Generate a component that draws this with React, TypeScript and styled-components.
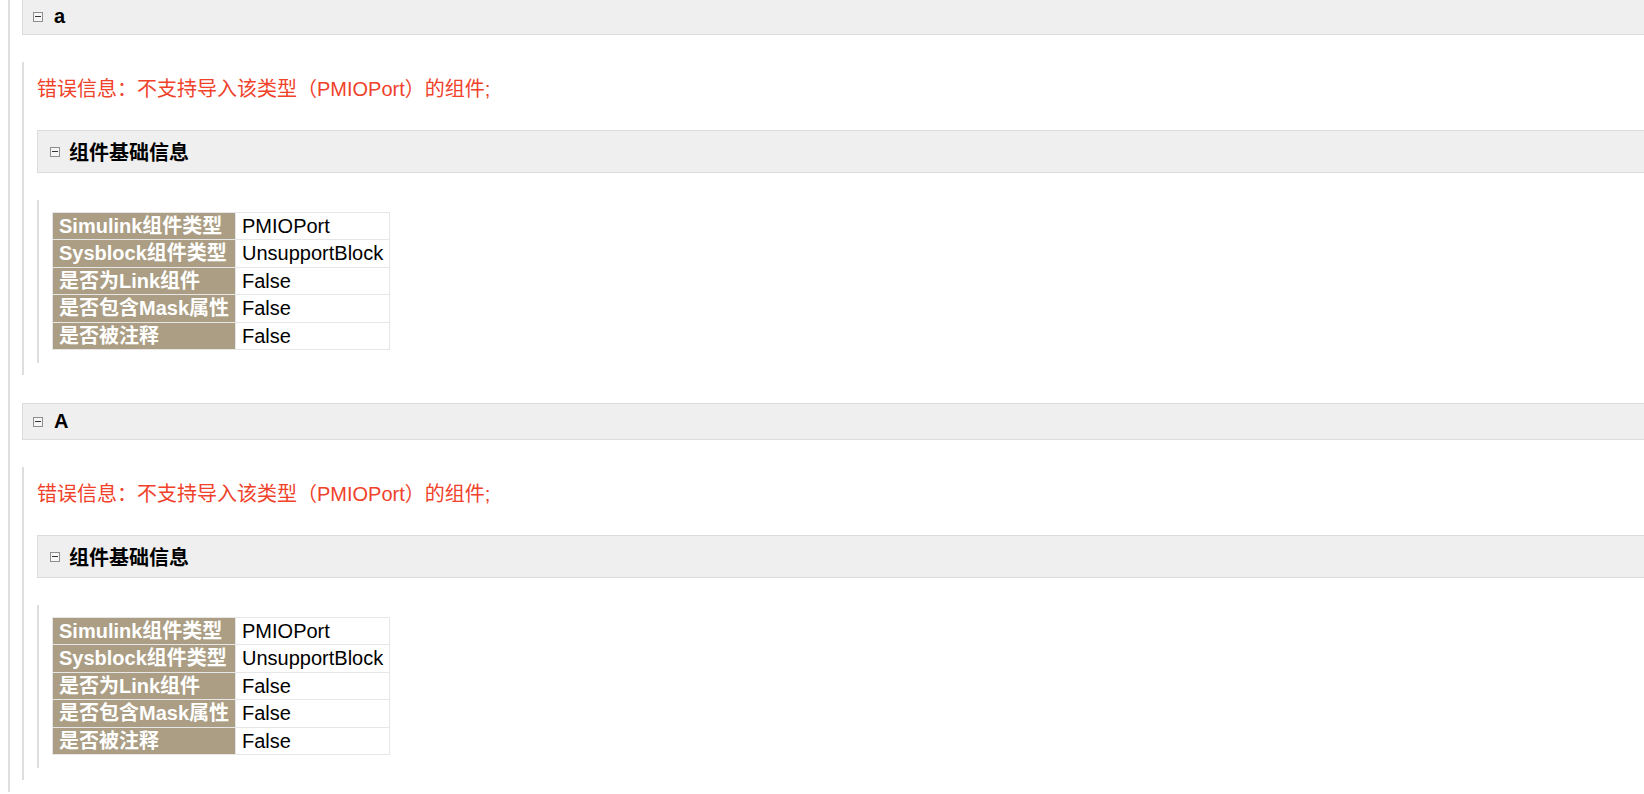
import styled, { createGlobalStyle } from 'styled-components';

const GlobalStyle = createGlobalStyle`
  html, body {
    margin: 0;
    padding: 0;
    background: #fff;
    overflow: hidden;
  }
  body {
    padding-left: 8px;
    font-family: "Liberation Sans", Arial, "Noto Sans CJK SC", sans-serif;
  }
`

interface InfoRow {
  label: string
  value: string
}

interface BlockData {
  name: string
  error: string
  rows: InfoRow[]
}

const blocks: BlockData[] = [
  {
    name: 'a',
    error: '错误信息：不支持导入该类型（PMIOPort）的组件;',
    rows: [
      { label: 'Simulink组件类型', value: 'PMIOPort' },
      { label: 'Sysblock组件类型', value: 'UnsupportBlock' },
      { label: '是否为Link组件', value: 'False' },
      { label: '是否包含Mask属性', value: 'False' },
      { label: '是否被注释', value: 'False' },
    ],
  },
  {
    name: 'A',
    error: '错误信息：不支持导入该类型（PMIOPort）的组件;',
    rows: [
      { label: 'Simulink组件类型', value: 'PMIOPort' },
      { label: 'Sysblock组件类型', value: 'UnsupportBlock' },
      { label: '是否为Link组件', value: 'False' },
      { label: '是否包含Mask属性', value: 'False' },
      { label: '是否被注释', value: 'False' },
    ],
  },
]

const Toggle = () => <ToggleBox><ToggleBar /></ToggleBox>

export default function App() {
  return (
    <>
      <GlobalStyle />
      <Page>
        {blocks.map((block, i) => (
          <Section key={i}>
            <Header>
              <Toggle />
              <HeaderTitle>{block.name}</HeaderTitle>
            </Header>
            <Body>
              <ErrorText>{block.error}</ErrorText>
              <SubHeader>
                <Toggle />
                <SubTitle>组件基础信息</SubTitle>
              </SubHeader>
              <SubBody>
                <InfoTable>
                  <tbody>
                    {block.rows.map(row => (
                      <tr key={row.label}>
                        <LabelCell>{row.label}</LabelCell>
                        <ValueCell>{row.value}</ValueCell>
                      </tr>
                    ))}
                  </tbody>
                </InfoTable>
              </SubBody>
            </Body>
          </Section>
        ))}
      </Page>
    </>
  )
}

const Page = styled.div`
  min-height: 100vh;
  margin-top: -2px;
  padding-left: 12px;
  border-left: 2px solid #dedede;
`

const Section = styled.section`
  margin-bottom: 28px;
`

const Header = styled.div`
  display: flex;
  align-items: center;
  box-sizing: border-box;
  height: 37px;
  margin-right: -40px;
  padding-left: 10px;
  background: #efefef;
  border-top: 1px solid #dcdcdc;
  border-bottom: 1px solid #dcdcdc;
  border-left: 1px solid #dcdcdc;
`

const HeaderTitle = styled.span`
  margin-left: 11px;
  font-size: 20px;
  font-weight: bold;
  color: #000;
`

const ToggleBox = styled.span`
  display: inline-flex;
  align-items: center;
  justify-content: center;
  box-sizing: border-box;
  width: 10px;
  height: 10px;
  border: 1px solid #8e8e8e;
  background: #f6f6f6;
`

const ToggleBar = styled.span`
  display: block;
  width: 6px;
  height: 1px;
  background: #333;
`

const Body = styled.div`
  margin-top: 27px;
  padding: 16px 0 12px 13px;
  border-left: 2px solid #dedede;
`

const ErrorText = styled.p`
  margin: 0;
  font-size: 20px;
  line-height: 23px;
  color: #f0412a;
`

const SubHeader = styled.div`
  display: flex;
  align-items: center;
  box-sizing: border-box;
  height: 43px;
  margin-top: 29px;
  margin-right: -40px;
  padding-left: 12px;
  background: #efefef;
  border-top: 1px solid #dcdcdc;
  border-bottom: 1px solid #dcdcdc;
  border-left: 1px solid #dcdcdc;
`

const SubTitle = styled.span`
  margin-left: 9px;
  font-size: 20px;
  font-weight: bold;
  color: #000;
`

const SubBody = styled.div`
  margin-top: 27px;
  padding: 12px 0 13px 13px;
  border-left: 2px solid #dedede;
`

const InfoTable = styled.table`
  border-collapse: collapse;
  font-size: 20px;
  line-height: 22.4px;
`

const LabelCell = styled.td`
  padding: 2px 6px;
  border: 1px solid #e6e6e6;
  background: #ab9e84;
  color: #fff;
  font-weight: bold;
  white-space: nowrap;
`

const ValueCell = styled.td`
  padding: 2px 6px;
  border: 1px solid #e6e6e6;
  background: #fff;
  color: #000;
  white-space: nowrap;
`
